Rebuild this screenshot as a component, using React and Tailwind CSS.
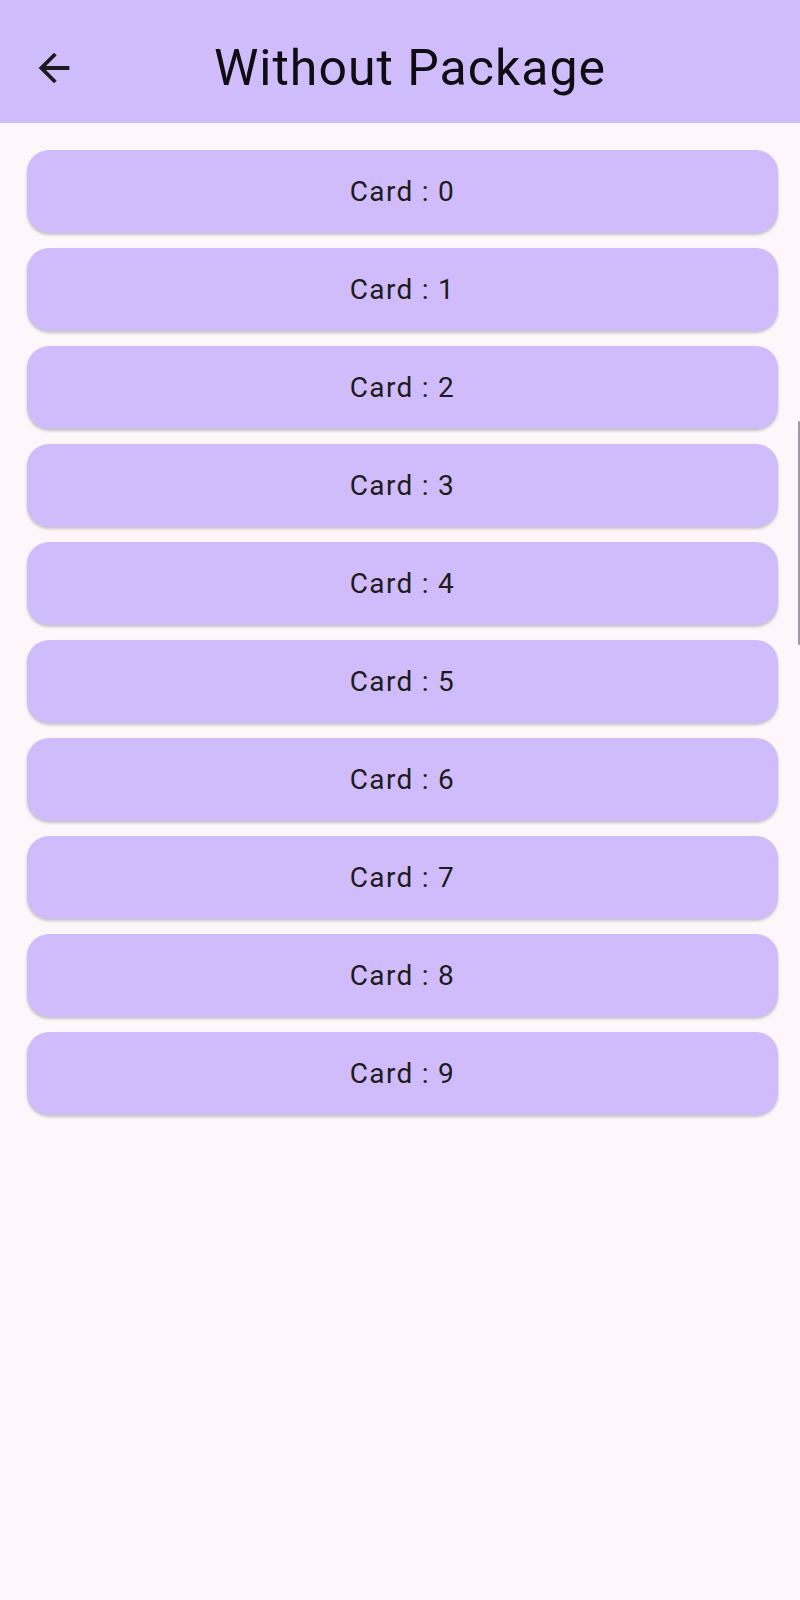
const cards = Array.from({ length: 10 }, (_, i) => i);

function BackArrow() {
  return (
    <svg width="46" height="46" viewBox="0 0 24 24" fill="#1d1b20">
      <path d="M20 11H7.83l5.59-5.59L12 4l-8 8 8 8 1.41-1.41L7.83 13H20v-2z" />
    </svg>
  );
}

export default function App() {
  return (
    <div
      className="relative w-[800px] h-[1600px] bg-[#fdf7fc] overflow-hidden"
      style={{ fontFamily: "Roboto, 'Noto Sans', sans-serif" }}
    >
      {/* App bar */}
      <header className="h-[123px] bg-[#d0bcfb] pt-[13px]">
        <div className="relative h-[110px] flex items-center justify-center">
          <button className="absolute left-[31px] top-1/2 -translate-y-1/2 flex items-center justify-center">
            <BackArrow />
          </button>
          <h1 className="text-[50px] leading-none text-[#0f0d13] pl-[20px] tracking-[1px]">
            Without Package
          </h1>
        </div>
      </header>

      {/* Card list */}
      <div className="flex flex-col gap-[15px] pt-[27px] pl-[27px] pr-[22px]">
        {cards.map((n) => (
          <div
            key={n}
            className="h-[83px] rounded-[22px] bg-[#d0bcfa] shadow-[0_2px_3px_rgba(0,0,0,0.22)] flex items-center justify-center"
          >
            <span className="text-[28px] tracking-[1.3px] text-[#1d1b20]">Card : {n}</span>
          </div>
        ))}
      </div>

      {/* scroll indicator */}
      <div className="absolute right-0 top-[421px] w-[2px] h-[224px] rounded-full bg-[#9e9aa3]" />
    </div>
  );
}
